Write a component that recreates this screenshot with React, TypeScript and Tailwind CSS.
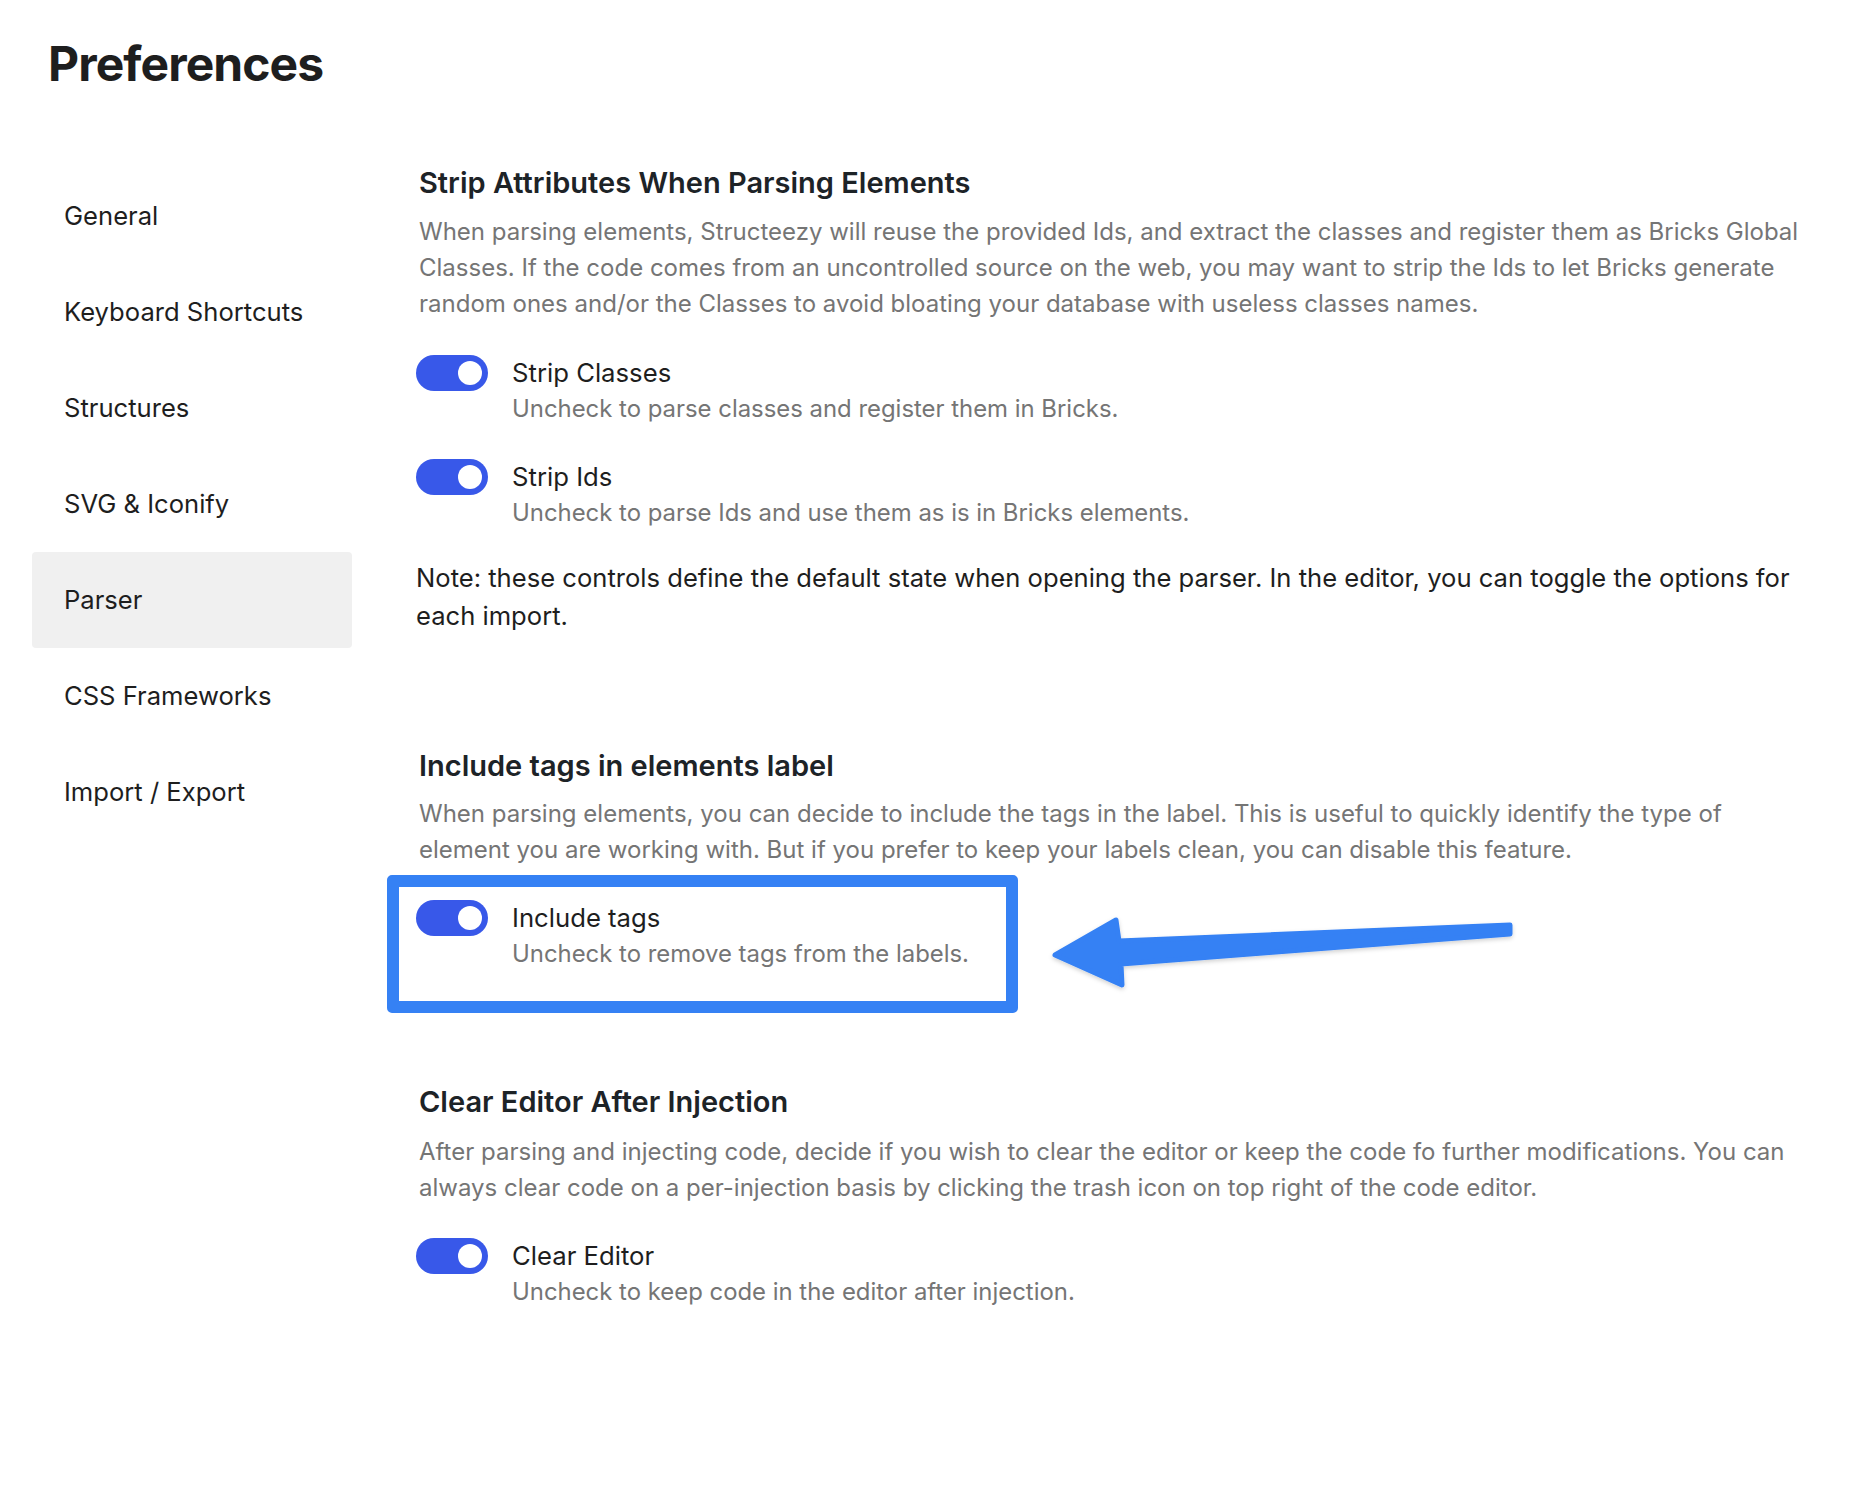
import React from "react";

const Toggle = () => (
  <div className="relative w-[72px] h-[36px] rounded-full bg-[#3858e9] shrink-0">
    <div className="absolute right-[6px] top-[6px] w-[24px] h-[24px] rounded-full bg-white" />
  </div>
);

const ToggleRow = ({
  label,
  help,
  children,
  className = "",
}: {
  label: string;
  help: string;
  children?: React.ReactNode;
  className?: string;
}) => (
  <div className={"relative flex gap-[24px] " + className}>
    <Toggle />
    <div>
      <div className="text-[25.7px] leading-[36px] text-[#1e1e1e]">{label}</div>
      <div className="text-[23.9px] leading-[36px] text-[#757575]">{help}</div>
    </div>
    {children}
  </div>
);

const navItems = [
  "General",
  "Keyboard Shortcuts",
  "Structures",
  "SVG & Iconify",
  "Parser",
  "CSS Frameworks",
  "Import / Export",
];

export default function App() {
  return (
    <div className="relative w-[1856px] h-[1502px] bg-white font-['Inter','Noto_Sans',sans-serif] text-[#1e1e1e] overflow-hidden">
      <h1 className="pt-[38px] pl-[48px] text-[48px] leading-[52px] font-bold tracking-[-0.019em] text-[#1e1e1e]">
        Preferences
      </h1>

      <div className="flex mt-[75px]">
        <nav className="ml-[32px] w-[320px] mt-[3px] flex flex-col">
          {navItems.map((item) => (
            <div
              key={item}
              className={
                "h-[96px] flex items-center pl-[32px] text-[25.6px] rounded-[4px] " +
                (item === "Parser" ? "bg-[#f0f0f0]" : "")
              }
            >
              {item}
            </div>
          ))}
        </nav>

        <main className="ml-[64px] w-[1400px]">
          {/* Section 1 */}
          <h2 className="pl-[3px] text-[29px] leading-[36px] font-semibold text-[#1d2327]">
            Strip Attributes When Parsing Elements
          </h2>
          <p className="pl-[3px] mt-[13px] text-[24px] leading-[36px] text-[#757575]">
            When parsing elements, Structeezy will reuse the provided Ids, and extract the classes and register them as Bricks Global Classes. If the code comes from an uncontrolled source on the web, you may want to strip the Ids to let Bricks generate random ones and/or the Classes to avoid bloating your database with useless classes names.
          </p>
          <ToggleRow
            className="mt-[33px]"
            label="Strip Classes"
            help="Uncheck to parse classes and register them in Bricks."
          />
          <ToggleRow
            className="mt-[32px]"
            label="Strip Ids"
            help="Uncheck to parse Ids and use them as is in Bricks elements."
          />
          <p className="mt-[28px] text-[25.6px] leading-[38px] text-[#1e1e1e]">
            Note: these controls define the default state when opening the parser. In the editor, you can toggle the options for each import.
          </p>

          {/* Section 2 */}
          <h2 className="mt-[113px] pl-[3px] text-[29px] leading-[36px] font-semibold text-[#1d2327]">
            Include tags in elements label
          </h2>
          <p className="pl-[3px] mt-[12px] text-[24px] leading-[36px] text-[#757575]">
            When parsing elements, you can decide to include the tags in the label. This is useful to quickly identify the type of element you are working with. But if you prefer to keep your labels clean, you can disable this feature.
          </p>
          <ToggleRow
            className="mt-[32px]"
            label="Include tags"
            help="Uncheck to remove tags from the labels."
          >
            <div className="absolute left-[-29px] top-[-25px] w-[631px] h-[138px] border-[12px] border-[#3581f4] rounded-[5px] pointer-events-none" />
          </ToggleRow>

          {/* Section 3 */}
          <h2 className="mt-[112px] pl-[3px] text-[29px] leading-[36px] font-semibold text-[#1d2327]">
            Clear Editor After Injection
          </h2>
          <p className="pl-[3px] mt-[14px] text-[24px] leading-[36px] text-[#757575]">
            After parsing and injecting code, decide if you wish to clear the editor or keep the code fo further modifications. You can always clear code on a per-injection basis by clicking the trash icon on top right of the code editor.
          </p>
          <ToggleRow
            className="mt-[32px]"
            label="Clear Editor"
            help="Uncheck to keep code in the editor after injection."
          />
        </main>
      </div>

      {/* Annotation arrow */}
      <svg
        className="absolute left-0 top-0 pointer-events-none"
        width="1856"
        height="1502"
        viewBox="0 0 1856 1502"
      >
        <defs>
          <filter id="sh" x="-10%" y="-50%" width="120%" height="200%">
            <feDropShadow dx="0" dy="2" stdDeviation="2" floodColor="#000" floodOpacity="0.18" />
          </filter>
        </defs>
        <path
          d="M1055 955 L1116 920 L1119 941 L1510 925 L1510 934 L1121 964 L1122 985 Z"
          fill="#3581f4"
          stroke="#3581f4"
          strokeWidth="5"
          strokeLinejoin="round"
          filter="url(#sh)"
        />
      </svg>
    </div>
  );
}
